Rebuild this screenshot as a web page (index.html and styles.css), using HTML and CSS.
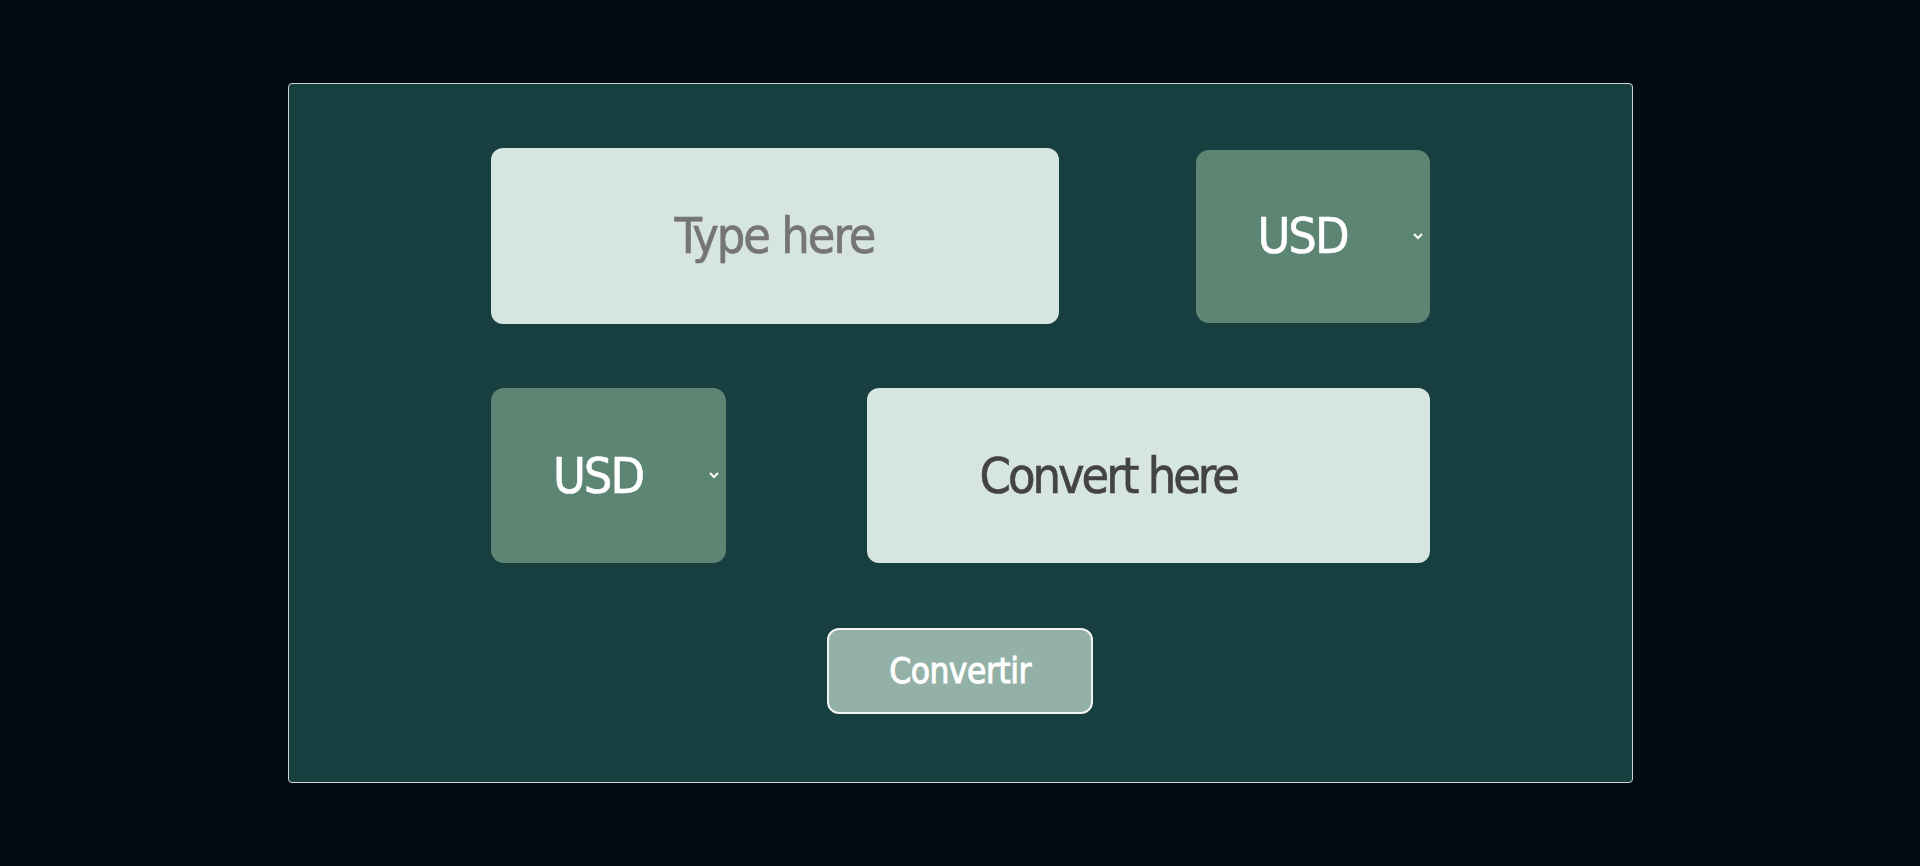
FILE: index.html
```html
<!DOCTYPE html>
<html lang="en">
<head>
<meta charset="utf-8">
<title>Conversor</title>
<link rel="stylesheet" href="styles.css">
</head>
<body>
  <main class="card">
    <div class="row row-top">
      <input class="field field-from" type="text" placeholder="Type here">
      <select class="currency currency-from">
        <option>USD</option>
        <option>EUR</option>
        <option>BRL</option>
      </select>
    </div>
    <div class="row row-bottom">
      <select class="currency currency-to">
        <option>USD</option>
        <option>EUR</option>
        <option>BRL</option>
      </select>
      <div class="field field-to">Convert here</div>
    </div>
    <button class="convert" type="button">Convertir</button>
  </main>
</body>
</html>
```

FILE: styles.css
```css
* {
  box-sizing: border-box;
}

html, body {
  margin: 0;
  height: 100%;
}

body {
  background: #040c13;
  display: flex;
  align-items: center;
  justify-content: center;
  font-family: "DejaVu Sans Condensed", "DejaVu Sans", sans-serif;
  font-stretch: condensed;
}

.card {
  width: 1345px;
  height: 700px;
  background: #183f3f;
  border: 1px solid #cfd2d2;
  border-radius: 4px;
  display: flex;
  flex-direction: column;
  align-items: center;
  padding-top: 64px;
}

.row {
  width: 939px;
  display: flex;
  justify-content: space-between;
  align-items: center;
}

.row-bottom {
  margin-top: 64px;
}

.field {
  height: 176px;
  background: #d7e5e0;
  border: none;
  border-radius: 12px;
  font-family: inherit;
  font-size: 50px;
  letter-spacing: -2px;
  -webkit-text-stroke: 0.6px currentColor;
  outline: none;
}

.field-from {
  width: 568px;
  text-align: center;
  padding: 0;
  color: #444444;
}

.field-from::placeholder {
  color: #757575;
  -webkit-text-stroke: 0.6px #757575;
}

.field-to {
  width: 563px;
  height: 175px;
  color: #434343;
  display: flex;
  align-items: center;
  padding-left: 113px;
  letter-spacing: -3px;
}

.currency {
  background-color: #5d8574;
  color: #ffffff;
  border: none;
  border-right: 4px solid transparent;
  border-radius: 13px;
  font-family: inherit;
  font-size: 50px;
  letter-spacing: -2px;
  -webkit-text-stroke: 0.6px currentColor;
  text-align: center;
  text-align-last: center;
  padding: 0 4px 0 0;
  outline: none;
}

.currency-from {
  width: 234px;
  height: 173px;
}

.currency-to {
  width: 235px;
  height: 175px;
}

.convert {
  margin-top: 65px;
  width: 266px;
  height: 86px;
  background: #94b1a7;
  border: 2px solid #f2f5f4;
  border-radius: 12px;
  color: #ffffff;
  font-family: inherit;
  font-weight: 400;
  font-size: 35px;
  letter-spacing: -0.5px;
  -webkit-text-stroke: 0.9px currentColor;
  cursor: pointer;
}
```
